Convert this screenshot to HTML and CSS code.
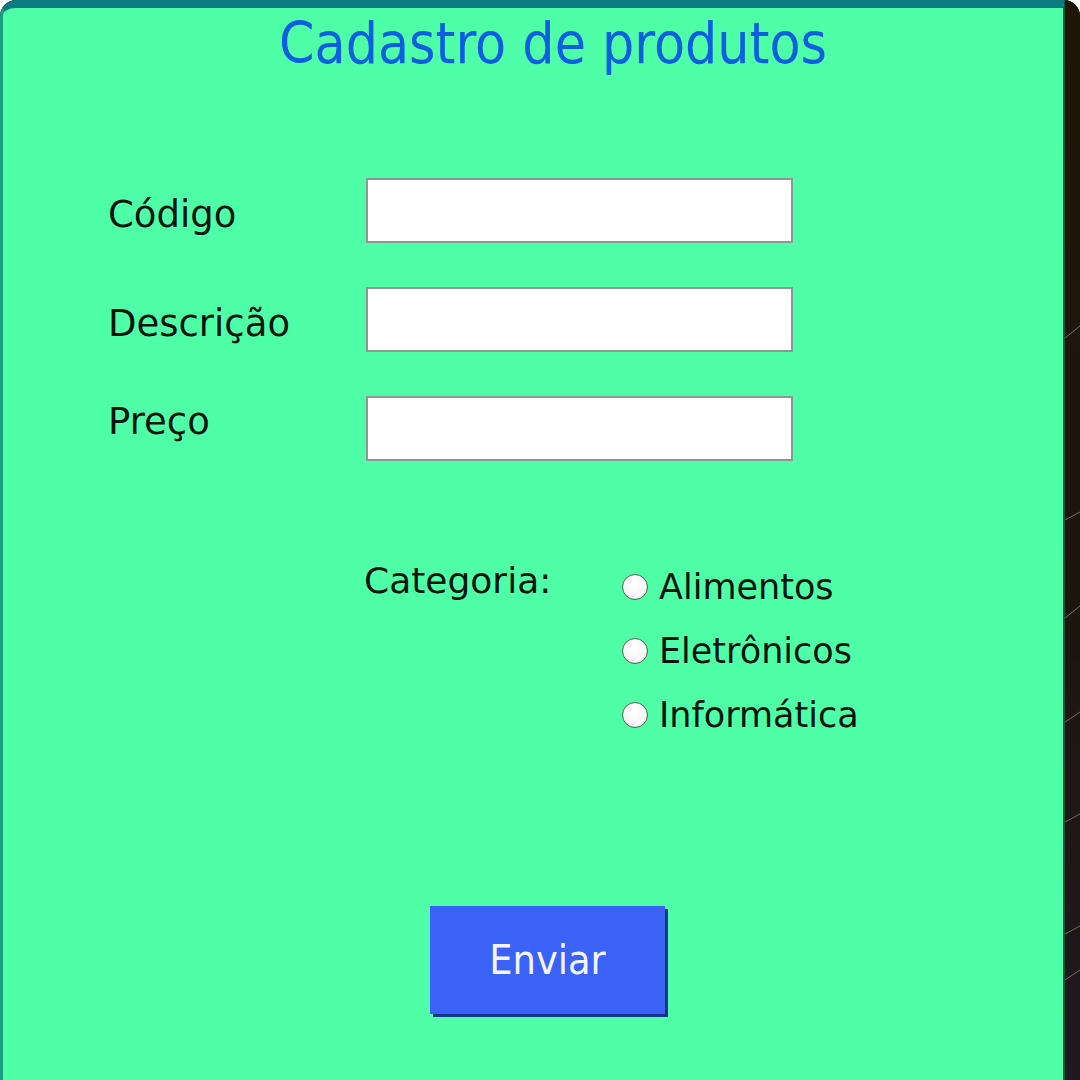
FILE: index.html
```html
<!DOCTYPE html>
<html lang="pt-BR">
<head>
<meta charset="utf-8">
<title>Cadastro de produtos</title>
<link rel="stylesheet" href="styles.css">
</head>
<body>
<div class="frame">
  <main class="panel">
    <h1 class="title">Cadastro de produtos</h1>
    <form class="form">
      <div class="fields">
        <label class="label" for="codigo">Código</label>
        <input class="input" id="codigo" type="text">
        <label class="label" for="descricao">Descrição</label>
        <input class="input" id="descricao" type="text">
        <label class="label label-up" for="preco">Preço</label>
        <input class="input" id="preco" type="text">
      </div>
      <div class="category">
        <span class="cat-label">Categoria:</span>
        <div class="options">
          <label class="option"><span class="radio"></span>Alimentos</label>
          <label class="option"><span class="radio"></span>Eletrônicos</label>
          <label class="option"><span class="radio"></span>Informática</label>
        </div>
      </div>
      <div class="actions">
        <button class="btn" type="button">Enviar</button>
      </div>
    </form>
  </main>
  <aside class="backdrop">
    <svg class="streaks" width="15" height="1080" viewBox="0 0 15 1080">
      <g stroke="#9c8f7c" stroke-width="1" opacity="0.7">
        <line x1="0" y1="338" x2="15" y2="326"/>
        <line x1="0" y1="520" x2="15" y2="512"/>
        <line x1="0" y1="618" x2="15" y2="606"/>
        <line x1="0" y1="722" x2="15" y2="712"/>
        <line x1="0" y1="822" x2="15" y2="814"/>
        <line x1="0" y1="934" x2="15" y2="926"/>
        <line x1="0" y1="980" x2="15" y2="970"/>
      </g>
    </svg>
  </aside>
</div>
</body>
</html>
```

FILE: styles.css
```css
* { box-sizing: border-box; }

html, body {
  margin: 0;
  padding: 0;
  background: #ffffff;
}

.frame {
  width: 1080px;
  height: 1080px;
  display: flex;
  border-radius: 16px 16px 0 0;
  overflow: hidden;
  background: #1d150c;
}

.panel {
  width: 1065px;
  flex: none;
  background: #4fffa8;
  border-top: 8px solid #0b7d80;
  border-left: 3px solid #1a9c86;
  border-right: 2px solid #0d5a3a;
  border-top-left-radius: 16px;
  font-family: "DejaVu Sans", Tahoma, Verdana, sans-serif;
  color: #07140c;
}

.backdrop {
  flex: 1;
  position: relative;
  background: linear-gradient(180deg, #1f1608 0%, #1f1510 60%, #211820 100%);
}

.streaks {
  position: absolute;
  left: 0;
  top: 0;
}

.title {
  margin: 0;
  padding: 3px 0 0 276px;
  font-family: "DejaVu Sans Condensed", "DejaVu Sans", Tahoma, sans-serif;
  font-weight: normal;
  font-size: 56.5px;
  line-height: 66px;
  color: #0d5fe0;
}

.form {
  margin: 0;
}

.fields {
  display: grid;
  grid-template-columns: 258px 427px;
  row-gap: 44px;
  margin: 101px 0 0 105px;
  align-items: center;
}

.label {
  font-size: 37px;
  line-height: 44px;
  padding-top: 8px;
}

.label-up {
  margin-top: -22px;
}

.input {
  width: 427px;
  height: 65px;
  margin: 0;
  border: 2px solid #8a9a90;
  background: #ffffff;
  font-size: 28px;
  padding: 0 8px;
  border-radius: 0;
}

.category {
  display: flex;
  margin: 98px 0 0 361px;
}

.cat-label {
  width: 258px;
  font-size: 36px;
  line-height: 44px;
}

.options {
  display: flex;
  flex-direction: column;
  gap: 20px;
  padding-top: 6px;
}

.option {
  display: flex;
  align-items: center;
  gap: 11px;
  font-size: 35px;
  line-height: 44px;
}

.radio {
  width: 26px;
  height: 26px;
  border-radius: 50%;
  border: 1.5px solid #55605a;
  background: radial-gradient(circle at 50% 40%, #ffffff 0%, #f6f6f6 60%, #e2e2e2 100%);
  flex: none;
}

.actions {
  display: flex;
  margin: 169px 0 0 427px;
}

.btn {
  width: 235px;
  height: 108px;
  background: #3a62f6;
  border: none;
  box-shadow: 3px 3px 0 #163588;
  color: #f2f4ff;
  font-family: "DejaVu Sans Condensed", "DejaVu Sans", Tahoma, sans-serif;
  font-size: 41px;
  padding: 0;
}
```
